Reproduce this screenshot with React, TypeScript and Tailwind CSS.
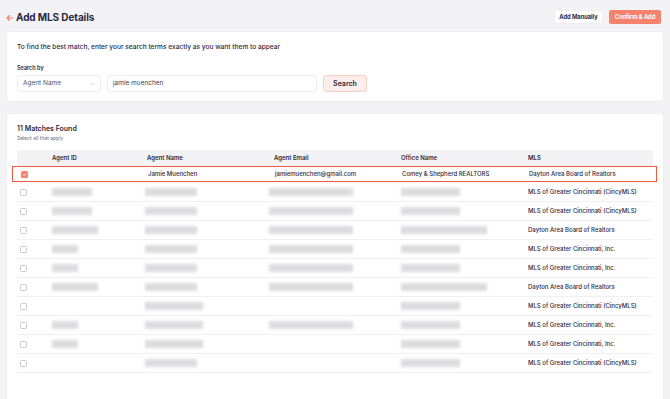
import React from "react";

type Row = {
  id: number;
  name: number;
  email: number;
  office: number;
  mls: string;
};

const rows: Row[] = [
  { id: 40, name: 52, email: 84, office: 59, mls: "MLS of Greater Cincinnati (CincyMLS)" },
  { id: 40, name: 52, email: 84, office: 59, mls: "MLS of Greater Cincinnati (CincyMLS)" },
  { id: 46, name: 52, email: 84, office: 86, mls: "Dayton Area Board of Realtors" },
  { id: 26, name: 52, email: 84, office: 59, mls: "MLS of Greater Cincinnati, Inc." },
  { id: 26, name: 52, email: 84, office: 59, mls: "MLS of Greater Cincinnati, Inc." },
  { id: 46, name: 52, email: 84, office: 86, mls: "Dayton Area Board of Realtors" },
  { id: 0, name: 58, email: 0, office: 59, mls: "MLS of Greater Cincinnati (CincyMLS)" },
  { id: 26, name: 58, email: 84, office: 59, mls: "MLS of Greater Cincinnati, Inc." },
  { id: 26, name: 58, email: 0, office: 59, mls: "MLS of Greater Cincinnati, Inc." },
  { id: 0, name: 52, email: 0, office: 59, mls: "MLS of Greater Cincinnati (CincyMLS)" },
];

function Blur({ w, cls }: { w: number; cls?: string }) {
  if (!w) return <div className="h-[8px]" />;
  return (
    <div
      className={"h-[8px] bg-[#d4d4d8] blur-[1.5px] opacity-80 " + (cls ?? "")}
      style={{ width: w }}
    />
  );
}

export default function App() {
  return (
    <div
      className="min-h-[399px] bg-[#f3f3f6] text-[#2c2a3d] overflow-hidden"
      style={{ fontFamily: "Inter, 'Noto Sans', sans-serif" }}
    >
      {/* Header */}
      <div className="flex items-center justify-between pl-[6px] pr-[9px] pt-[7px] h-[27px]">
        <div className="flex items-center gap-[2px]">
          <svg width="8" height="8" viewBox="0 0 8 8" className="mt-[1px]">
            <path d="M7 4H1.2M3.6 1.5L1 4l2.6 2.5" stroke="#f4826d" strokeWidth="1.1" fill="none" strokeLinecap="round" strokeLinejoin="round" />
          </svg>
          <span className="text-[10px] font-bold leading-none tracking-[-0.1px]">Add MLS Details</span>
        </div>
        <div className="flex items-center gap-[6px]">
          <button className="h-[14px] w-[49px] bg-white rounded-[2px] border border-[#efeff2] text-[5.8px] font-bold leading-none text-[#2c2a3d] tracking-[-0.05px]">Add Manually</button>
          <button className="h-[14px] w-[52px] bg-[#f4826d] rounded-[2px] text-[5.8px] font-bold leading-none text-white tracking-[-0.05px]">Confirm &amp; Add</button>
        </div>
      </div>

      {/* Search card */}
      <div className="mx-[7px] mt-[5px] bg-white rounded-[3px] px-[10px] pt-[12px] pb-[10px] h-[69px] shadow-[0_0_0_0.5px_#ececef]">
        <div className="text-[6.6px] font-medium leading-none">To find the best match, enter your search terms exactly as you want them to appear</div>
        <div className="text-[5.5px] font-semibold leading-none mt-[15px]">Search by</div>
        <div className="flex items-center mt-[4px] gap-[6px]">
          <div className="w-[84px] h-[17px] border border-[#eeeef0] rounded-[3px] flex items-center justify-between px-[5px]">
            <span className="text-[6.5px] text-[#55536a] leading-none">Agent Name</span>
            <svg width="5" height="4" viewBox="0 0 5 4">
              <path d="M0.5 1l2 2 2-2" stroke="#f4a898" strokeWidth="0.7" fill="none" />
            </svg>
          </div>
          <div className="w-[210px] h-[17px] border border-[#eeeef0] rounded-[3px] flex items-center px-[5px]">
            <span className="text-[6.5px] text-[#3c3a50] leading-none">jamie muenchen</span>
          </div>
          <button className="w-[44px] h-[17px] bg-[#fdeeeb] border border-[#f8cfc6] rounded-[3px] text-[7px] font-semibold leading-none text-[#2c2a3d]">Search</button>
        </div>
      </div>

      {/* Results card */}
      <div className="mx-[7px] mt-[13px] bg-white rounded-t-[3px] px-[10px] pt-[11px] h-[300px] shadow-[0_0_0_0.5px_#ececef]">
        <div className="text-[7px] font-semibold leading-none">11 Matches Found</div>
        <div className="text-[5px] text-[#6b6a7b] leading-none mt-[4px]">Select all that apply</div>

        <div className="mt-[9px]">
          {/* header row */}
          <div className="flex items-center h-[16px] bg-[#f3f3f5] text-[6px] font-semibold leading-none">
            <div className="w-[35px]" />
            <div className="w-[95px]">Agent ID</div>
            <div className="w-[127px]">Agent Name</div>
            <div className="w-[127px]">Agent Email</div>
            <div className="w-[127px]">Office Name</div>
            <div className="flex-1">MLS</div>
          </div>

          {/* selected row */}
          <div className="h-[17px]">
            <div className="flex items-center h-[16px] -ml-[5px] -mr-[4px] pl-[5px] border border-[#ef5a3f] text-[6px] font-medium leading-none">
              <div className="w-[35px] pl-[3px]">
                <div className="w-[7px] h-[7px] rounded-[1.5px] bg-[#f4826d] flex items-center justify-center">
                  <svg width="5" height="5" viewBox="0 0 5 5">
                    <path d="M1 2.6l1 1 2-2.2" stroke="white" strokeWidth="0.8" fill="none" />
                  </svg>
                </div>
              </div>
              <div className="w-[95px]" />
              <div className="w-[127px]">Jamie Muenchen</div>
              <div className="w-[127px]">jamiemuenchen@gmail.com</div>
              <div className="w-[127px]">Comey &amp; Shepherd REALTORS</div>
              <div className="flex-1">Dayton Area Board of Realtors</div>
            </div>
          </div>

          {rows.map((r, i) => (
            <div key={i} className="flex items-center h-[19px] border-b border-[#f0f0f2] text-[6px] font-medium leading-none">
              <div className="w-[35px] pl-[3px]">
                <div className="w-[7px] h-[7px] rounded-[1.5px] border-[0.5px] border-[#c9c9cf]" />
              </div>
              <div className="w-[95px]"><Blur w={r.id} /></div>
              <div className="w-[127px]"><Blur w={r.name} cls="-ml-[2px]" /></div>
              <div className="w-[127px]"><Blur w={r.email} cls="-ml-[5px]" /></div>
              <div className="w-[127px]"><Blur w={r.office} /></div>
              <div className="flex-1">{r.mls}</div>
            </div>
          ))}
        </div>
      </div>
    </div>
  );
}
